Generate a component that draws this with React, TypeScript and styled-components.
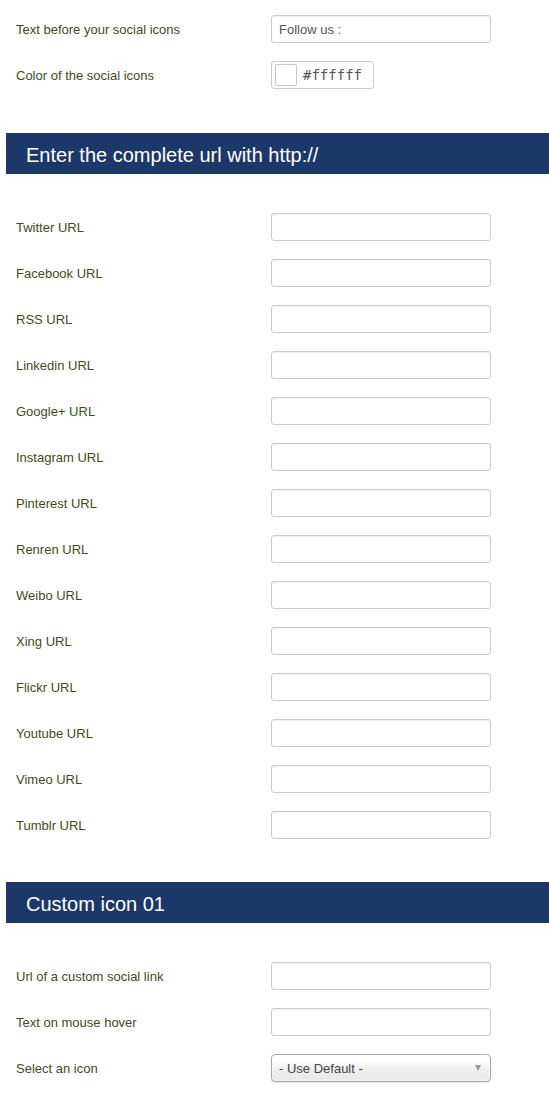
import React from "react";
import styled, { createGlobalStyle } from "styled-components";

const Global = createGlobalStyle`
  html, body { margin: 0; padding: 0; background: #fff; }
  body { font-family: "Helvetica Neue", "Liberation Sans", Arial, sans-serif; }
`;

const Page = styled.div`
  padding: 6px 0 20px 6px;
  width: 543px;
`;

const Rows = styled.div`
  display: flex;
  flex-direction: column;
`;

const Row = styled.div`
  display: flex;
  align-items: center;
  height: 46px;
  padding-left: 10px;
`;

const Label = styled.label`
  width: 255px;
  font-size: 13px;
  color: #3f4b1e;
`;

const TextInput = styled.input`
  box-sizing: border-box;
  width: 220px;
  height: 28px;
  border: 1px solid #cccccc;
  border-radius: 3px;
  box-shadow: inset 0 1px 1px rgba(0, 0, 0, 0.06);
  padding: 0 7px;
  font-family: "Helvetica Neue", "Liberation Sans", Arial, sans-serif;
  font-size: 13px;
  color: #555;
  background: #fff;
  outline: none;
`;

const ColorBox = styled.div`
  box-sizing: border-box;
  width: 103px;
  height: 28px;
  border: 1px solid #cccccc;
  border-radius: 3px;
  display: flex;
  align-items: center;
  padding-left: 3px;
  gap: 6px;
  background: #fff;
`;

const Swatch = styled.span<{ $color: string }>`
  box-sizing: border-box;
  width: 22px;
  height: 22px;
  border: 1px solid #c8c8c8;
  border-radius: 2px;
  background: ${(p) => p.$color};
`;

const ColorText = styled.span`
  font-family: "DejaVu Sans Mono", "Liberation Mono", monospace;
  font-size: 14px;
  color: #555;
`;

const Header = styled.div<{ $top: number }>`
  box-sizing: border-box;
  margin: ${(p) => p.$top}px 0 30px;
  height: 41px;
  background: #1c3869;
  color: #fff;
  display: flex;
  align-items: center;
  padding: 3px 0 0 20px;
  font-size: 20px;
`;

const Select = styled.div`
  box-sizing: border-box;
  width: 220px;
  height: 28px;
  border: 1px solid #aaaaaa;
  border-radius: 4px;
  background: linear-gradient(#ffffff 20%, #f0f0f0 50%, #e8e8e8 100%);
  box-shadow: 0 0 3px #ffffff inset, 0 1px 2px rgba(0, 0, 0, 0.12);
  display: flex;
  align-items: center;
  justify-content: space-between;
  padding: 0 9px 0 7px;
  font-size: 13px;
  color: #444;
`;

const Arrow = styled.span`
  width: 0;
  height: 0;
  border-left: 3.5px solid transparent;
  border-right: 3.5px solid transparent;
  border-top: 6px solid #999;
`;

const urls = [
  "Twitter URL",
  "Facebook URL",
  "RSS URL",
  "Linkedin URL",
  "Google+ URL",
  "Instagram URL",
  "Pinterest URL",
  "Renren URL",
  "Weibo URL",
  "Xing URL",
  "Flickr URL",
  "Youtube URL",
  "Vimeo URL",
  "Tumblr URL",
];

export default function App() {
  return (
    <>
      <Global />
      <Page>
        <Rows>
          <Row>
            <Label>Text before your social icons</Label>
            <TextInput defaultValue="Follow us :" />
          </Row>
          <Row>
            <Label>Color of the social icons</Label>
            <ColorBox>
              <Swatch $color="#ffffff" />
              <ColorText>#ffffff</ColorText>
            </ColorBox>
          </Row>
        </Rows>
        <Header $top={35}>Enter the complete url with http://</Header>
        <Rows>
          {urls.map((u) => (
            <Row key={u}>
              <Label>{u}</Label>
              <TextInput />
            </Row>
          ))}
        </Rows>
        <Header $top={34}>Custom icon 01</Header>
        <Rows>
          <Row>
            <Label>Url of a custom social link</Label>
            <TextInput />
          </Row>
          <Row>
            <Label>Text on mouse hover</Label>
            <TextInput />
          </Row>
          <Row>
            <Label>Select an icon</Label>
            <Select>
              <span>- Use Default -</span>
              <Arrow />
            </Select>
          </Row>
        </Rows>
      </Page>
    </>
  );
}
